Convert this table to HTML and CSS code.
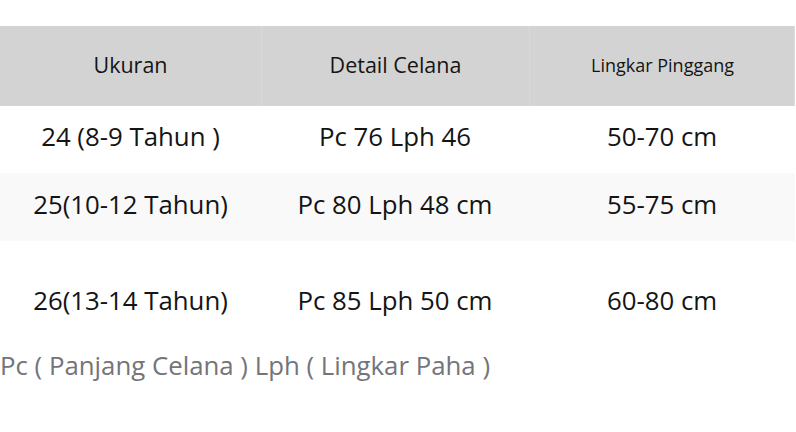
FILE: index.html
```html
<!DOCTYPE html>
<html lang="id">
<head>
<meta charset="utf-8">
<title>Ukuran Celana</title>
<link rel="stylesheet" href="styles.css">
</head>
<body>
<div class="page">
  <div class="table">
    <div class="row head">
      <div class="cell">Ukuran</div>
      <div class="cell">Detail Celana</div>
      <div class="cell small">Lingkar Pinggang</div>
    </div>
    <div class="row r1">
      <div class="cell">24 (8-9 Tahun )</div>
      <div class="cell">Pc 76 Lph 46</div>
      <div class="cell">50-70 cm</div>
    </div>
    <div class="row r2 alt">
      <div class="cell">25(10-12 Tahun)</div>
      <div class="cell">Pc 80 Lph 48 cm</div>
      <div class="cell">55-75 cm</div>
    </div>
    <div class="row r3">
      <div class="cell">26(13-14 Tahun)</div>
      <div class="cell">Pc 85 Lph 50 cm</div>
      <div class="cell">60-80 cm</div>
    </div>
  </div>
  <p class="note">Pc ( Panjang Celana ) Lph ( Lingkar Paha )</p>
</div>
</body>
</html>
```
FILE: styles.css
```css
html, body {
  margin: 0;
  padding: 0;
  background: #ffffff;
}
body {
  font-family: "Open Sans", "Noto Sans", sans-serif;
  color: #141414;
}
.page {
  padding-top: 26px;
  width: 796px;
}
.table {
  width: 795px;
}
.row {
  display: grid;
  grid-template-columns: 261px 268px 266px;
  align-items: center;
  font-size: 25.8px;
  line-height: 34px;
}
.cell {
  text-align: center;
  white-space: nowrap;
}
.head {
  background: #d3d3d3;
  height: 80px;
  font-size: 21.5px;
  border-right: 1px solid #dcdcdc;
  box-sizing: border-box;
}
.head .cell {
  height: 100%;
  display: flex;
  align-items: center;
  justify-content: center;
  padding-bottom: 3px;
  box-sizing: border-box;
}
.head .cell + .cell {
  border-left: 1px solid #d9d9d9;
}
.head .small {
  font-size: 18px;
}
.r1 {
  height: 67px;
  padding-bottom: 7px;
  box-sizing: border-box;
}
.r2 {
  height: 68px;
  padding-bottom: 7px;
  box-sizing: border-box;
}
.alt {
  background: #f9f9f9;
}
.r3 {
  padding-top: 42px;
  padding-bottom: 16px;
}
.note {
  margin: 15px 0 0 0;
  font-size: 25.8px;
  line-height: 34px;
  color: #74747a;
}
```
